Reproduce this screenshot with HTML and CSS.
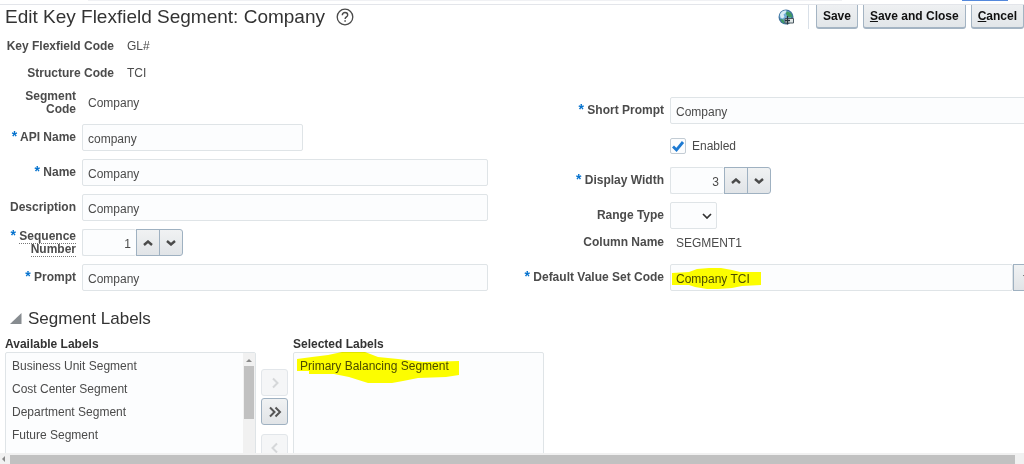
FILE: index.html
```
<!DOCTYPE html>
<html lang="en">
<head>
  <meta charset="UTF-8">
  <meta name="viewport" content="width=device-width, initial-scale=1.0">
  <title>Edit Key Flexfield Segment</title>
  <link rel="stylesheet" href="styles.css">
</head>
<body>
  <div class="top-strip"><span class="strip-grey"></span><span class="strip-blue"></span></div>

  <main class="page">
    <header class="page-header">
      <h1>Edit Key Flexfield Segment: Company</h1>
      <button type="button" class="icon-btn" aria-label="Help">
        <svg width="18" height="18" viewBox="0 0 18 18" fill="none" stroke="#4a4a4a">
          <circle cx="9" cy="9" r="7.8" stroke-width="1.3"/>
          <path d="M6.3 7.2C6.3 5.5 7.4 4.5 9 4.5s2.7 1 2.7 2.4c0 1.9-2.6 2-2.6 4.1" stroke-width="1.4"/>
          <path d="M9.1 12.2v1.6" stroke-width="1.5"/>
        </svg>
      </button>
      <div class="actions">
        <button type="button" class="icon-btn globe" aria-label="Translations">
          <svg width="17" height="17" viewBox="0 0 17 17">
            <circle cx="8" cy="8" r="7.5" fill="#41749f"/>
            <circle cx="7.4" cy="7.2" r="5.8" fill="#72add6"/>
            <path d="M2 5.5C3.5 2 6 1 8.500 1.500L7.500 4 5.500 5.500 6.500 8 4.500 9.500 2.500 8.500z" fill="#d9edf5"/>
            <path d="M9 2.200l4 1.800 1.500 4-3 .5L9 7 7.800 4.500zM2.500 10l3 .5 1 4C4.500 14 3 12.500 2.500 10z" fill="#3f9a62"/>
            <path d="M7 9.500h8.500v4.500H7z" fill="#dfe6e6" stroke="#4b5960"/>
            <path d="M9.500 7v8.500M7 11.500h5" stroke="#26343c" stroke-width="1.300"/>
          </svg>
        </button>
        <span class="divider"></span>
        <button type="button" class="btn">Save</button>
        <button type="button" class="btn"><u>S</u>ave and Close</button>
        <button type="button" class="btn"><u>C</u>ancel</button>
      </div>
    </header>

    <dl class="codes">
      <dt>Key Flexfield Code</dt><dd>GL#</dd>
      <dt>Structure Code</dt><dd>TCI</dd>
    </dl>

    <form class="segment-form">
      <div class="form-left">
        <div class="row">
          <span class="label">Segment Code</span>
          <span class="value">Company</span>
        </div>
        <div class="row">
          <label class="label" for="apiName"><span class="req">*</span> API Name</label>
          <input type="text" class="field field-short" id="apiName" value="company" required>
        </div>
        <div class="row">
          <label class="label" for="name"><span class="req">*</span> Name</label>
          <input type="text" class="field" id="name" value="Company" required>
        </div>
        <div class="row">
          <label class="label" for="description">Description</label>
          <input type="text" class="field" id="description" value="Company">
        </div>
        <div class="row">
          <label class="label" for="sequence"><span class="req">*</span> <span class="hint">Sequence</span> <span class="hint">Number</span></label>
          <div class="spinner">
            <input type="text" class="field" id="sequence" value="1" required>
            <button type="button" aria-label="Increase sequence number"><svg width="10" height="6" viewBox="0 0 10 6"><path d="M1 5l4-3.500L9 5"/></svg></button>
            <button type="button" aria-label="Decrease sequence number"><svg width="10" height="6" viewBox="0 0 10 6"><path d="M1 1l4 3.500L9 1"/></svg></button>
          </div>
        </div>
        <div class="row">
          <label class="label" for="prompt"><span class="req">*</span> Prompt</label>
          <input type="text" class="field" id="prompt" value="Company" required>
        </div>
      </div>

      <div class="form-right">
        <div class="row">
          <label class="label" for="shortPrompt"><span class="req">*</span> Short Prompt</label>
          <input type="text" class="field" id="shortPrompt" value="Company" required>
        </div>
        <div class="row">
          <span class="label"></span>
          <input type="checkbox" class="check" id="enabled" checked>
          <label class="check-label" for="enabled">Enabled</label>
        </div>
        <div class="row">
          <label class="label" for="displayWidth"><span class="req">*</span> Display Width</label>
          <div class="spinner">
            <input type="text" class="field" id="displayWidth" value="3" required>
            <button type="button" aria-label="Increase display width"><svg width="10" height="6" viewBox="0 0 10 6"><path d="M1 5l4-3.500L9 5"/></svg></button>
            <button type="button" aria-label="Decrease display width"><svg width="10" height="6" viewBox="0 0 10 6"><path d="M1 1l4 3.500L9 1"/></svg></button>
          </div>
        </div>
        <div class="row row-tight">
          <label class="label" for="rangeType">Range Type</label>
          <select class="field range" id="rangeType"><option></option></select>
        </div>
        <div class="row">
          <span class="label">Column Name</span>
          <span class="value">SEGMENT1</span>
        </div>
        <div class="row">
          <label class="label" for="valueSet"><span class="req">*</span> Default Value Set Code</label>
          <div class="combo">
            <input type="text" class="field" id="valueSet" value="Company TCI" required>
            <button type="button" aria-label="Search value sets"><svg width="8" height="5" viewBox="0 0 8 5"><path d="M0 0h8L4 5z"/></svg></button>
            <svg class="marker marker-set" width="90" height="21" viewBox="0 0 90 21"><path d="M0 5l17-1 8-3 12-1h12l11 2 8 2h21v13l-19 1-10 2-14 1H35l-12-2-6-2H0z"/></svg>
          </div>
        </div>
      </div>
    </form>

    <section>
      <h2>
        <svg width="12" height="12" viewBox="0 0 12 12"><path d="M11.500 0v11H0z" fill="#878c90"/></svg>
        Segment Labels
      </h2>
      <div class="shuttle">
        <div class="list">
          <label for="available">Available Labels</label>
          <select id="available" multiple size="4">
            <option>Business Unit Segment</option>
            <option>Cost Center Segment</option>
            <option>Department Segment</option>
            <option>Future Segment</option>
          </select>
          <div class="v-scroll">
            <svg width="12" height="13" viewBox="0 0 12 13"><path d="M3 9h6L6 6z" fill="#8a8a8a"/></svg>
            <span class="v-thumb"></span>
          </div>
        </div>
        <div class="moves">
          <button type="button" aria-label="Move selected" disabled><svg width="14" height="12" viewBox="0 0 14 12"><path d="M5 1.500L9.500 6 5 10.500"/></svg></button>
          <button type="button" aria-label="Move all"><svg width="14" height="12" viewBox="0 0 14 12"><path d="M2 1.500L6.500 6 2 10.500M7.500 1.500L12 6l-4.500 4.500"/></svg></button>
          <button type="button" class="move-back" aria-label="Remove selected" disabled><svg width="14" height="12" viewBox="0 0 14 12"><path d="M9 1.500L4.500 6 9 10.500"/></svg></button>
        </div>
        <div class="list">
          <label for="selected">Selected Labels</label>
          <select id="selected" multiple size="4">
            <option>Primary Balancing Segment</option>
          </select>
          <svg class="marker marker-label" width="163" height="32" viewBox="0 0 163 32"><path d="M0 7l15-2 16-2 14-3h23l13 5 20 2 25 3 36-1v14l-13 2-28 1-15 3-11 2H71L52 25l-15-3H12v-3H0z"/></svg>
        </div>
      </div>
    </section>
  </main>

  <div class="h-scroll">
    <svg width="10" height="10" viewBox="0 0 10 10"><path d="M5 2v6L2 5z" fill="#8a8a8a"/></svg>
    <span class="h-thumb"></span>
  </div>
</body>
</html>
```
FILE: styles.css
```
* {
  box-sizing: border-box;
}
body {
  margin: 0;
  height: 100vh;
  display: flex;
  flex-direction: column;
  overflow: hidden;
  background: #fff;
  color: #4b4b4b;
  font-family: "Liberation Sans", Arial, sans-serif;
  font-size: 12px;
}
input, select, button {
  font: inherit;
  color: inherit;
  margin: 0;
}
.top-strip {
  display: flex;
  justify-content: space-between;
  flex: none;
  height: 5px;
  padding: 0 16px 0 88px;
  border-bottom: 1px solid #e3e5ea;
}
.strip-grey {
  width: 82%;
  height: 1px;
  background: #f0f1f4;
}
.strip-blue {
  width: 46px;
  height: 1px;
  background: #5488dc;
}
.page {
  flex: 1;
  min-height: 0;
  overflow: hidden;
}

/* header */
.page-header {
  display: flex;
  align-items: center;
  height: 24px;
  padding-left: 5px;
}
h1, h2 {
  margin: 0;
  font-weight: 400;
  color: #333;
}
h1 {
  font-size: 19px;
  line-height: 22px;
}
.icon-btn {
  display: flex;
  padding: 0;
  margin-left: 11px;
  border: none;
  background: none;
}
.actions {
  display: flex;
  align-items: center;
  align-self: stretch;
  gap: 5px;
  margin-left: auto;
}
.divider {
  width: 1px;
  height: 24px;
  margin: 0 2px 0 8px;
  background: #d9e0e8;
}
.btn {
  height: 24px;
  padding: 0 6px 1px;
  border: 1px solid #a4b4c3;
  border-top: none;
  border-bottom-width: 2px;
  border-radius: 0 0 3px 3px;
  background: linear-gradient(#eef0f2, #e2e6e9);
  color: #111;
  font-weight: 700;
}

/* read only codes */
.codes {
  display: grid;
  grid-template-columns: 109px auto;
  justify-content: start;
  column-gap: 13px;
  margin: 4px 0 2px 5px;
  line-height: 27px;
}
.codes dt {
  text-align: right;
  font-weight: 700;
}
.codes dd {
  margin: 0;
}

/* segment form */
.segment-form {
  display: flex;
  justify-content: space-between;
}
.form-left {
  width: 488px;
}
.form-right {
  width: 520px;
  margin: 8px -16px 0 0;
}
.row {
  display: flex;
  align-items: center;
  height: 27px;
  margin-bottom: 8px;
}
.row-tight {
  margin-bottom: 0;
}
.label {
  flex: none;
  width: 76px;
  padding-left: 4px;
  margin-right: 6px;
  text-align: right;
  line-height: 13px;
  font-weight: 700;
}
.form-right .label {
  width: 144px;
  padding-left: 0;
}
.req {
  color: #0572ce;
  font-size: 14px;
  line-height: 1px;
}
.hint {
  border-bottom: 1px dotted #777;
}
.value {
  padding-left: 6px;
}
.field {
  flex: 1;
  min-width: 0;
  height: 27px;
  padding: 2px 5px 0;
  border: 1px solid #dfe4e7;
  border-radius: 2px;
  background: #fcfdfe;
}
.field-short {
  flex: none;
  width: 221px;
}
.spinner {
  display: flex;
}
.spinner .field {
  flex: none;
  width: 54px;
  border-right: none;
  text-align: right;
}
.spinner button, .combo button {
  display: flex;
  align-items: center;
  justify-content: center;
  width: 24px;
  height: 27px;
  padding: 0;
  border: 1px solid #9fb1c1;
  background: linear-gradient(#f0f2f3, #e1e4e7);
}
.spinner button:last-child {
  margin-left: -1px;
  border-radius: 0 3px 3px 0;
}
.spinner svg {
  fill: none;
  stroke: #4a4a4a;
  stroke-width: 2.4;
}
.check {
  appearance: none;
  width: 16px;
  height: 16px;
  border: 1px solid #c3ccd4;
  border-radius: 2px;
  background: #fcfdfe;
}
.check:checked {
  background: #fcfdfe url("data:image/svg+xml,%3Csvg xmlns='http://www.w3.org/2000/svg' viewBox='0 0 14 14'%3E%3Cpath d='M2 7.500l3.500 3.500L12 3' fill='none' stroke='%231d7ad2' stroke-width='2.800'/%3E%3C/svg%3E") center / 14px no-repeat;
}
.check-label {
  padding-left: 6px;
}
.range {
  appearance: none;
  flex: none;
  width: 47px;
  background: #fcfdfe url("data:image/svg+xml,%3Csvg xmlns='http://www.w3.org/2000/svg' viewBox='0 0 10 6'%3E%3Cpath d='M1 1l4 4 4-4' fill='none' stroke='%23333' stroke-width='1.700'/%3E%3C/svg%3E") right 4px center / 10px 6px no-repeat;
}
.combo {
  position: relative;
  display: flex;
  flex: 1;
}
.combo button {
  width: 27px;
}
.combo button svg {
  fill: #333;
}

/* yellow highlighter */
.marker {
  position: absolute;
  fill: #ff0;
  mix-blend-mode: multiply;
  pointer-events: none;
}
.marker-set {
  left: 2px;
  top: 4px;
}
.marker-label {
  left: 4px;
  top: 16px;
}

/* segment labels */
h2 {
  display: flex;
  align-items: center;
  gap: 6px;
  margin-top: 9px;
  padding-left: 10px;
  font-size: 17px;
  line-height: 22px;
}
.shuttle {
  display: flex;
  gap: 5px;
  padding: 6px 0 0 5px;
}
.list {
  position: relative;
  width: 251px;
}
.list label {
  display: block;
  color: #333;
  font-weight: 700;
  line-height: 16px;
}
.list select {
  display: block;
  width: 100%;
  height: 115px;
  padding: 2px 0 0;
  border: 1px solid #dfe4e7;
  border-radius: 2px;
  background: #fcfdfe;
  overflow: hidden;
}
.list option {
  height: 23px;
  padding: 4px 6px 0;
}
.v-scroll {
  position: absolute;
  top: 17px;
  right: 1px;
  bottom: 1px;
  display: flex;
  flex-direction: column;
  align-items: center;
  width: 12px;
  background: #f1f1f1;
}
.v-thumb {
  width: 10px;
  height: 53px;
  background: #c1c1c1;
}
.moves {
  display: flex;
  flex-direction: column;
  gap: 2px;
  padding-top: 33px;
}
.moves button {
  display: flex;
  align-items: center;
  justify-content: center;
  width: 27px;
  height: 27px;
  padding: 0;
  border: 1px solid #9fb1c1;
  border-radius: 3px;
  background: linear-gradient(#f0f2f3, #e1e4e7);
}
.moves svg {
  fill: none;
  stroke: #555;
  stroke-width: 2;
}
.moves button:disabled {
  border-color: #e2e6ea;
  background: #f5f6f7;
}
.moves button:disabled svg {
  stroke: #d5d7d9;
}
.moves .move-back {
  margin-top: 7px;
}

/* horizontal scrollbar */
.h-scroll {
  display: flex;
  align-items: center;
  flex: none;
  height: 11px;
  padding-right: 9px;
  background: #f1f1f1;
}
.h-thumb {
  flex: 1;
  align-self: stretch;
  margin-top: 2px;
  background: #c1c1c1;
}
```
